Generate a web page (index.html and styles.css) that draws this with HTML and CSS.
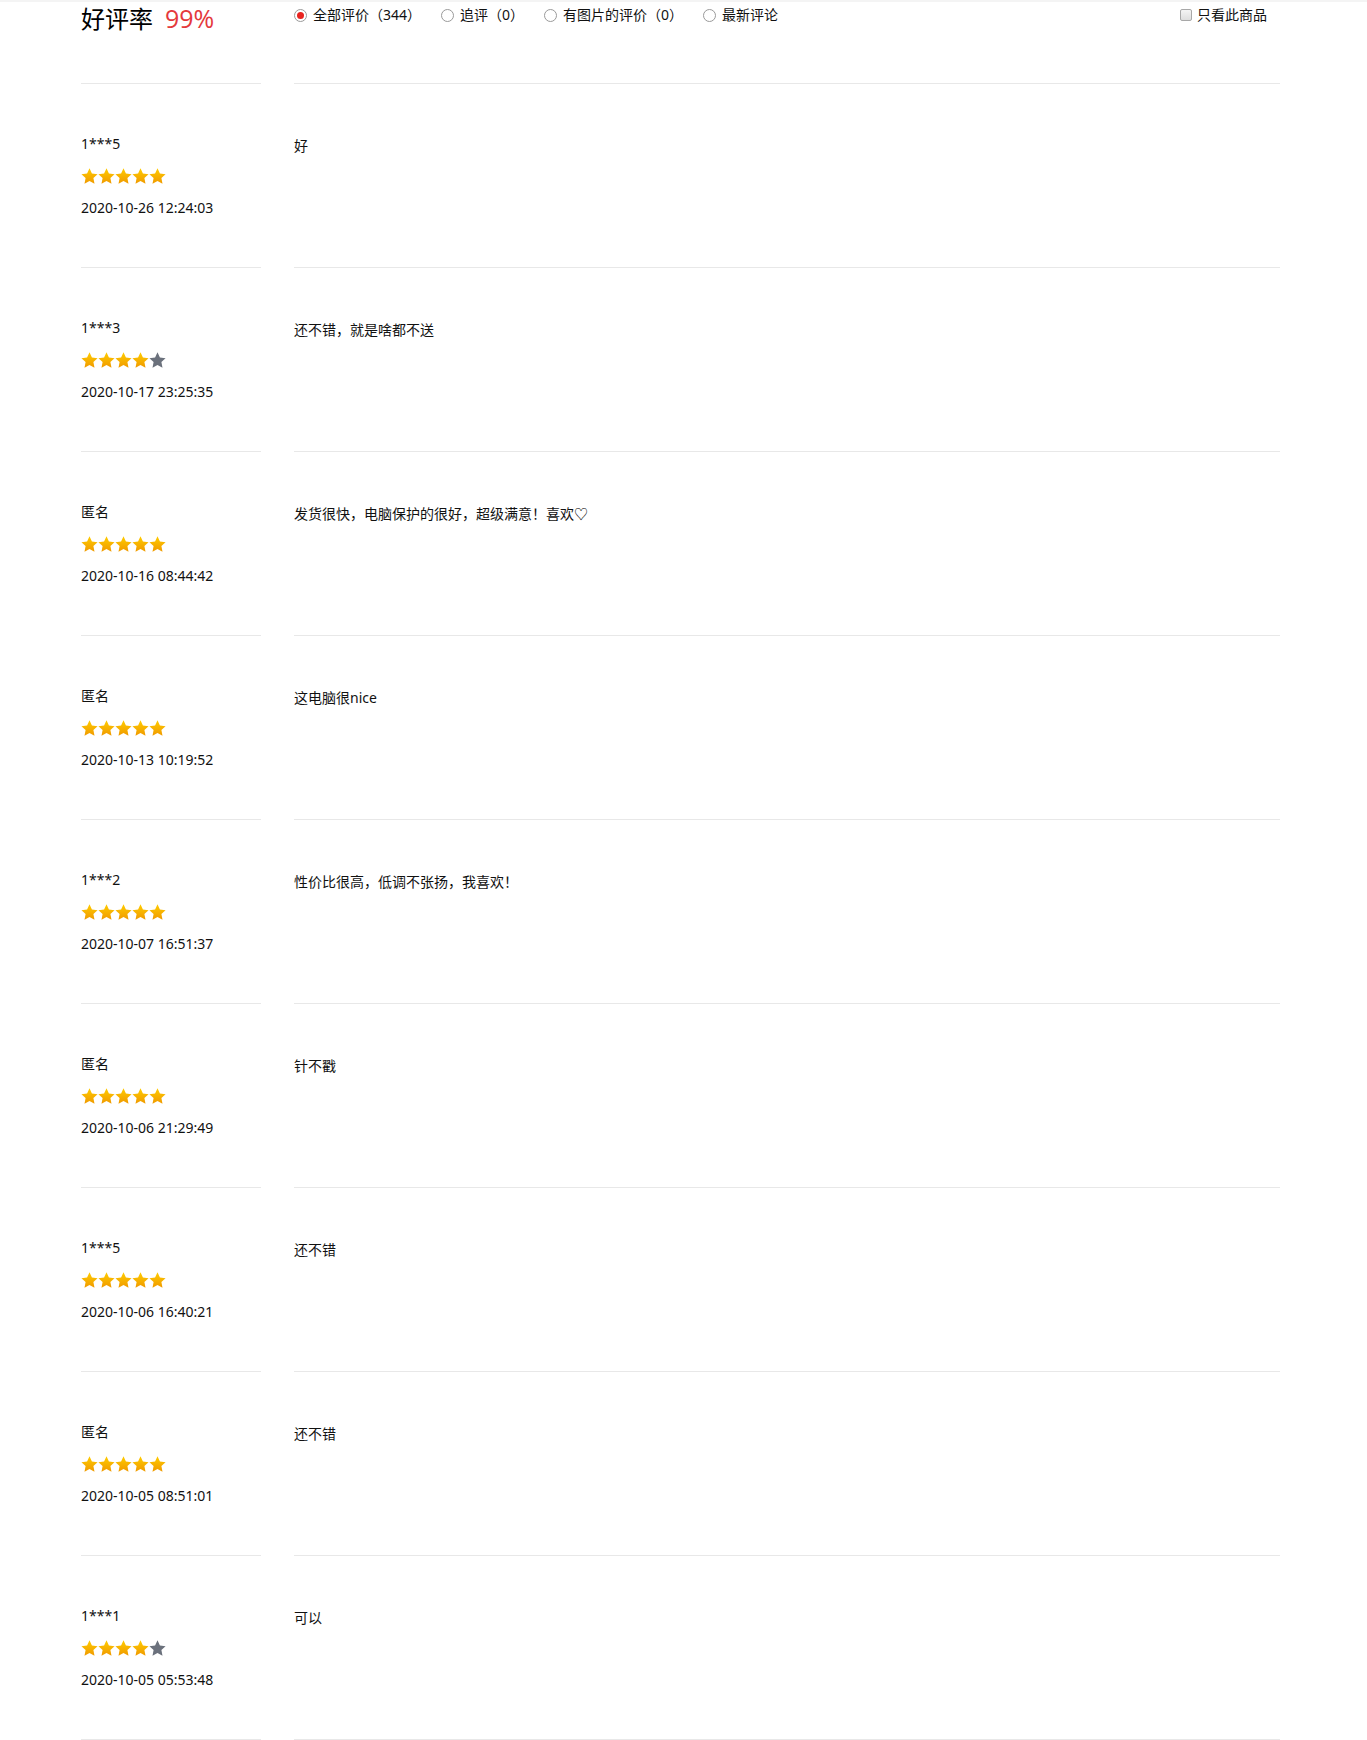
FILE: index.html
```html
<!DOCTYPE html>
<html lang="zh">
<head>
<meta charset="utf-8">
<title>评价</title>
<link rel="stylesheet" href="styles.css">
</head>
<body>
<svg width="0" height="0" class="defs">
  <defs>
    <linearGradient id="g" x1="0" y1="0" x2="0" y2="1">
      <stop offset="0" stop-color="#ffcc00"/>
      <stop offset="1" stop-color="#f09a00"/>
    </linearGradient>
    <symbol id="star" viewBox="0 0 17 16">
      <path d="M8.5 0.3 L10.91 5.48 L16.58 6.17 L12.4 10.07 L13.5 15.68 L8.5 12.9 L3.5 15.68 L4.6 10.07 L0.42 6.17 L6.09 5.48 Z"/>
    </symbol>
  </defs>
</svg>
<div class="topbar"></div>
<div class="wrap">
  <div class="row head">
    <div class="left"><span class="rate-label">好评率</span><span class="rate">99%</span></div>
    <div class="right filters">
      <label class="opt"><span class="radio on"></span>全部评价（344）</label>
      <label class="opt"><span class="radio"></span>追评（0）</label>
      <label class="opt"><span class="radio"></span>有图片的评价（0）</label>
      <label class="opt"><span class="radio"></span>最新评论</label>
      <label class="only"><span class="check"></span>只看此商品</label>
    </div>
  </div>

  <div class="row">
    <div class="left"><div class="user">1***5</div><div class="stars s5"><svg><use href="#star"/></svg><svg><use href="#star"/></svg><svg><use href="#star"/></svg><svg><use href="#star"/></svg><svg><use href="#star"/></svg></div><div class="date">2020-10-26 12:24:03</div></div>
    <div class="right"><p class="text">好</p></div>
  </div>
  <div class="row">
    <div class="left"><div class="user">1***3</div><div class="stars"><svg><use href="#star"/></svg><svg><use href="#star"/></svg><svg><use href="#star"/></svg><svg><use href="#star"/></svg><svg class="off"><use href="#star"/></svg></div><div class="date">2020-10-17 23:25:35</div></div>
    <div class="right"><p class="text">还不错，就是啥都不送</p></div>
  </div>
  <div class="row">
    <div class="left"><div class="user">匿名</div><div class="stars"><svg><use href="#star"/></svg><svg><use href="#star"/></svg><svg><use href="#star"/></svg><svg><use href="#star"/></svg><svg><use href="#star"/></svg></div><div class="date">2020-10-16 08:44:42</div></div>
    <div class="right"><p class="text">发货很快，电脑保护的很好，超级满意！喜欢♡</p></div>
  </div>
  <div class="row">
    <div class="left"><div class="user">匿名</div><div class="stars"><svg><use href="#star"/></svg><svg><use href="#star"/></svg><svg><use href="#star"/></svg><svg><use href="#star"/></svg><svg><use href="#star"/></svg></div><div class="date">2020-10-13 10:19:52</div></div>
    <div class="right"><p class="text">这电脑很nice</p></div>
  </div>
  <div class="row">
    <div class="left"><div class="user">1***2</div><div class="stars"><svg><use href="#star"/></svg><svg><use href="#star"/></svg><svg><use href="#star"/></svg><svg><use href="#star"/></svg><svg><use href="#star"/></svg></div><div class="date">2020-10-07 16:51:37</div></div>
    <div class="right"><p class="text">性价比很高，低调不张扬，我喜欢！</p></div>
  </div>
  <div class="row">
    <div class="left"><div class="user">匿名</div><div class="stars"><svg><use href="#star"/></svg><svg><use href="#star"/></svg><svg><use href="#star"/></svg><svg><use href="#star"/></svg><svg><use href="#star"/></svg></div><div class="date">2020-10-06 21:29:49</div></div>
    <div class="right"><p class="text">针不戳</p></div>
  </div>
  <div class="row">
    <div class="left"><div class="user">1***5</div><div class="stars"><svg><use href="#star"/></svg><svg><use href="#star"/></svg><svg><use href="#star"/></svg><svg><use href="#star"/></svg><svg><use href="#star"/></svg></div><div class="date">2020-10-06 16:40:21</div></div>
    <div class="right"><p class="text">还不错</p></div>
  </div>
  <div class="row">
    <div class="left"><div class="user">匿名</div><div class="stars"><svg><use href="#star"/></svg><svg><use href="#star"/></svg><svg><use href="#star"/></svg><svg><use href="#star"/></svg><svg><use href="#star"/></svg></div><div class="date">2020-10-05 08:51:01</div></div>
    <div class="right"><p class="text">还不错</p></div>
  </div>
  <div class="row">
    <div class="left"><div class="user">1***1</div><div class="stars"><svg><use href="#star"/></svg><svg><use href="#star"/></svg><svg><use href="#star"/></svg><svg><use href="#star"/></svg><svg class="off"><use href="#star"/></svg></div><div class="date">2020-10-05 05:53:48</div></div>
    <div class="right"><p class="text">可以</p></div>
  </div>
</div>
</body>
</html>
```
FILE: styles.css
```css
html, body {
  margin: 0;
  padding: 0;
  background: #fff;
}
body {
  font-family: "Noto Sans", "Noto Sans CJK SC", sans-serif;
  font-size: 14px;
  color: #111;
}
.defs {
  position: absolute;
  width: 0;
  height: 0;
}
.topbar {
  height: 2px;
  background: #f4f4f4;
}
.wrap {
  margin-left: 81px;
  width: 1199px;
}
.row {
  display: flex;
  gap: 33px;
  height: 184px;
}
.left {
  width: 180px;
  flex: none;
  box-sizing: border-box;
  border-bottom: 1px solid #e8e8e8;
  padding-top: 50px;
}
.right {
  flex: 1;
  box-sizing: border-box;
  border-bottom: 1px solid #e8e8e8;
  padding-top: 52px;
}
.row.head {
  height: 82px;
}
.head .left {
  padding-top: 0;
  display: flex;
  align-items: baseline;
}
.rate-label {
  font-family: "Noto Sans CJK SC", sans-serif;
  font-size: 24px;
  line-height: 32px;
  color: #000;
}
.rate {
  font-family: "Open Sans", "Noto Sans", sans-serif;
  font-size: 25px;
  line-height: 32px;
  color: #e4393c;
  margin-left: 12px;
}
.filters {
  padding-top: 3px;
  display: flex;
  align-items: flex-start;
  height: 82px;
}
.opt, .only {
  display: flex;
  align-items: center;
  line-height: 20px;
  font-size: 14px;
  color: #111;
}
.opt { margin-right: 20px; }
.only { margin-left: auto; margin-right: 13px; }
.radio {
  width: 13px;
  height: 13px;
  box-sizing: border-box;
  border: 1px solid #9a9a9a;
  border-radius: 50%;
  margin-right: 6px;
  background: #fff;
  position: relative;
}
.radio.on::after {
  content: "";
  position: absolute;
  left: 2px;
  top: 2px;
  width: 7px;
  height: 7px;
  border-radius: 50%;
  background: #e8231f;
}
.check {
  width: 12px;
  height: 12px;
  box-sizing: border-box;
  border: 1px solid #a8a8a8;
  border-radius: 2px;
  background: linear-gradient(#f4f4f4, #dedede);
  margin-right: 5px;
}
.user {
  line-height: 20px;
  height: 20px;
}
.stars {
  display: flex;
  margin-top: 14px;
  height: 16px;
}
.stars svg {
  width: 17px;
  height: 16px;
  fill: url(#g);
}
.stars svg.off {
  fill: #6b717c;
}
.date {
  margin-top: 14px;
  line-height: 20px;
}
.text {
  margin: 0;
  line-height: 20px;
  font-size: 14px;
}
```
